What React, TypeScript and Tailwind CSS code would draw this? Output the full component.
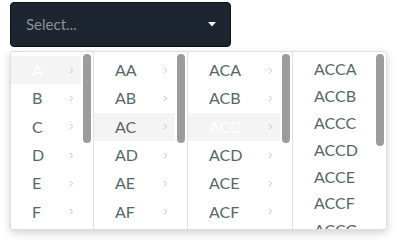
import React from "react";

const letters = "ABCDEFG".split("");

function Chevron() {
  return (
    <svg width="5" height="7" viewBox="0 0 5 7" className="shrink-0">
      <path d="M1 1 L3.8 3.5 L1 6" fill="none" stroke="#c4c4c4" strokeWidth="1" />
    </svg>
  );
}

type Item = { label: string; state?: "active" | "hover" };

function Column({
  items,
  width,
  leaf,
  thumbH,
}: {
  items: Item[];
  width: string;
  leaf?: boolean;
  thumbH: string;
}) {
  return (
    <div className={`relative flex h-full overflow-hidden ${width}`}>
      <div className="flex min-w-0 flex-1 flex-col pt-[4px]">
        {items.map((it) => (
          <div
            key={it.label}
            className={`flex shrink-0 items-center justify-between pl-[21px] pr-[7px] text-[16px] ${
              leaf ? "h-[26.8px]" : "h-[28.3px]"
            } ${it.state ? "bg-[#f4f4f4]" : ""} ${
              it.state === "active" ? "text-white" : "text-[#56676b]"
            }`}
          >
            <span>{it.label}</span>
            {!leaf && <Chevron />}
          </div>
        ))}
      </div>
      <div className="w-[12px] shrink-0 pt-[2px] pl-[2px]">
        <div className={`w-[8px] rounded-full bg-[#9c9c9c] ${thumbH}`} />
      </div>
    </div>
  );
}

export default function App() {
  const six = letters.slice(0, 6);
  const col1: Item[] = six.map((l) => ({ label: l, state: l === "A" ? "active" : undefined }));
  const col2: Item[] = six.map((l) => ({ label: "A" + l, state: l === "C" ? "hover" : undefined }));
  const col3: Item[] = six.map((l) => ({ label: "AC" + l, state: l === "C" ? "active" : undefined }));
  const col4: Item[] = letters.map((l) => ({ label: "ACC" + l }));
  return (
    <div
      className="h-[243px] w-[398px] bg-white pl-[10px] pt-[2px]"
      style={{ fontFamily: "Lato, 'Open Sans', sans-serif" }}
    >
      <div className="flex h-[45px] w-[221px] items-center justify-between rounded-[4px] border border-[#0e1217] bg-[#1d2530] pl-[15px] pr-[14px]">
        <span className="text-[15px] text-[#8b9096]">Select...</span>
        <svg width="8" height="5" viewBox="0 0 8 5">
          <path d="M0 0 L8 0 L4 4.5 Z" fill="#f2f2f2" />
        </svg>
      </div>
      <div className="mt-[4px] flex h-[179px] w-[377px] overflow-hidden rounded-[3px] border border-[#dedede] bg-white shadow-[0_3px_8px_rgba(0,0,0,0.18)]">
        <Column items={col1} width="w-[83px] border-r border-[#e2e2e2]" thumbH="h-[89px]" />
        <Column items={col2} width="w-[94px] border-r border-[#e2e2e2]" thumbH="h-[89px]" />
        <Column items={col3} width="w-[105px] border-r border-[#e2e2e2]" thumbH="h-[89px]" />
        <Column items={col4} width="flex-1" leaf thumbH="h-[92px]" />
      </div>
    </div>
  );
}
